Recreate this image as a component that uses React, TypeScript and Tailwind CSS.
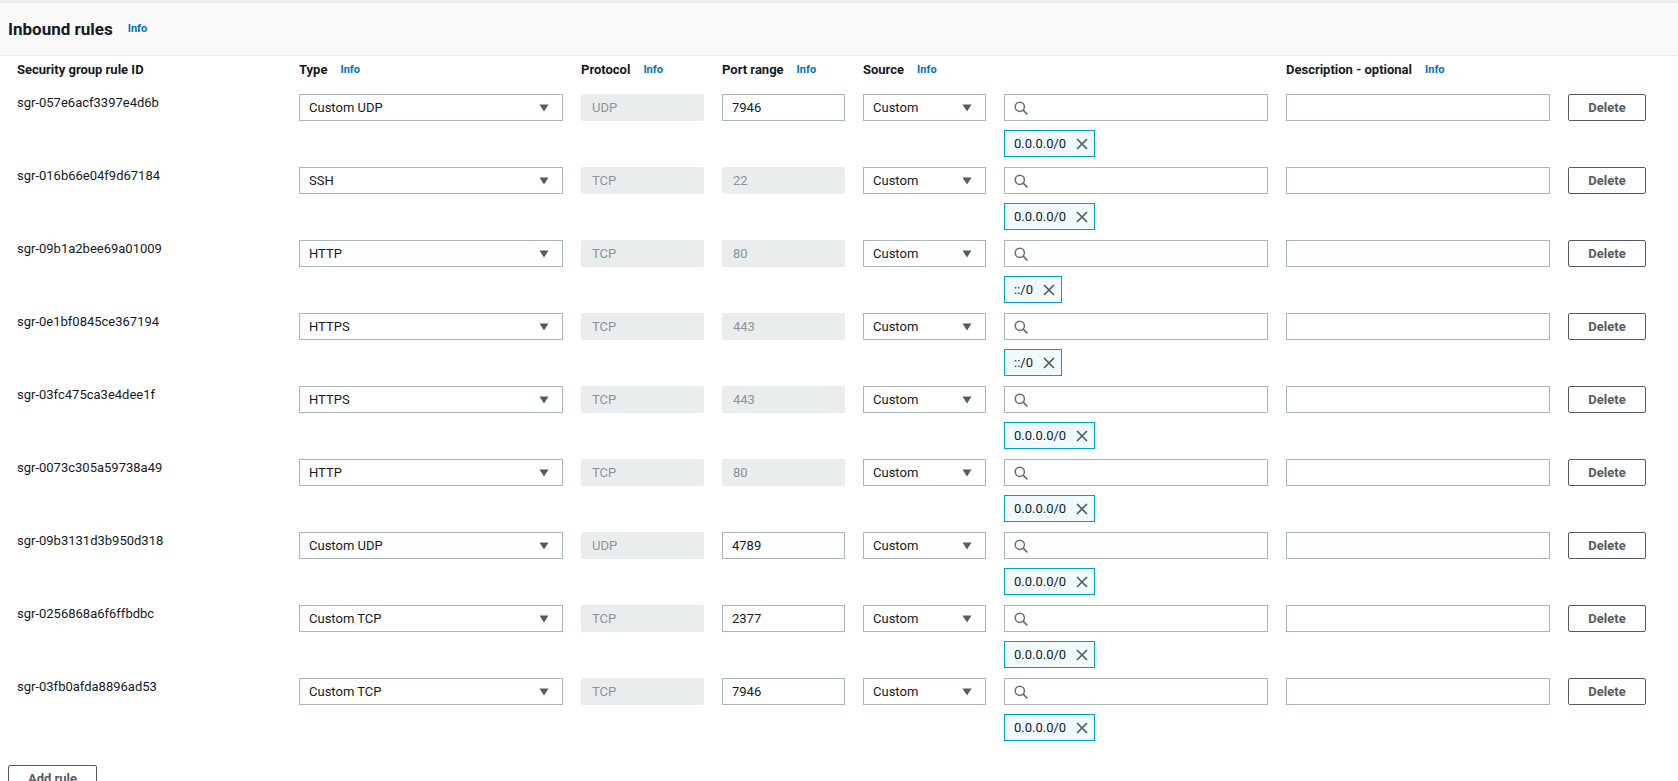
import React from "react";

type Rule = {
  id: string;
  type: string;
  protocol: string;
  port: string;
  portEditable: boolean;
  cidr: string;
};

const rules: Rule[] = [
  { id: "sgr-057e6acf3397e4d6b", type: "Custom UDP", protocol: "UDP", port: "7946", portEditable: true, cidr: "0.0.0.0/0" },
  { id: "sgr-016b66e04f9d67184", type: "SSH", protocol: "TCP", port: "22", portEditable: false, cidr: "0.0.0.0/0" },
  { id: "sgr-09b1a2bee69a01009", type: "HTTP", protocol: "TCP", port: "80", portEditable: false, cidr: "::/0" },
  { id: "sgr-0e1bf0845ce367194", type: "HTTPS", protocol: "TCP", port: "443", portEditable: false, cidr: "::/0" },
  { id: "sgr-03fc475ca3e4dee1f", type: "HTTPS", protocol: "TCP", port: "443", portEditable: false, cidr: "0.0.0.0/0" },
  { id: "sgr-0073c305a59738a49", type: "HTTP", protocol: "TCP", port: "80", portEditable: false, cidr: "0.0.0.0/0" },
  { id: "sgr-09b3131d3b950d318", type: "Custom UDP", protocol: "UDP", port: "4789", portEditable: true, cidr: "0.0.0.0/0" },
  { id: "sgr-0256868a6f6ffbdbc", type: "Custom TCP", protocol: "TCP", port: "2377", portEditable: true, cidr: "0.0.0.0/0" },
  { id: "sgr-03fb0afda8896ad53", type: "Custom TCP", protocol: "TCP", port: "7946", portEditable: true, cidr: "0.0.0.0/0" },
];

const Arrow = () => (
  <svg width="10" height="8" viewBox="0 0 10 8" className="shrink-0">
    <path d="M0.5 0.5 L9.5 0.5 L5 7.5 Z" fill="#545b64" />
  </svg>
);

const Search = () => (
  <svg width="14" height="14" viewBox="0 0 14 14" className="shrink-0" fill="none">
    <circle cx="5.8" cy="5.8" r="4.6" stroke="#687078" strokeWidth="1.5" />
    <path d="M9.2 9.2 L12.8 12.8" stroke="#687078" strokeWidth="1.8" strokeLinecap="round" />
  </svg>
);

const XIcon = () => (
  <svg width="12" height="12" viewBox="0 0 12 12" className="shrink-0" fill="none">
    <path d="M1 1 L11 11 M11 1 L1 11" stroke="#545b64" strokeWidth="1.7" />
  </svg>
);

const Info = () => (
  <span className="text-[11px] font-bold text-[#0073bb] leading-4">Info</span>
);

const Select = ({ value }: { value: string }) => (
  <div className="h-[27px] border border-[#aab7b8] bg-white flex items-center justify-between pl-[9px] pr-[13px] text-[13px] text-[#16191f]">
    <span>{value}</span>
    <Arrow />
  </div>
);

const Disabled = ({ value }: { value: string }) => (
  <div className="h-[27px] bg-[#eaeded] rounded-[2px] flex items-center pl-[11px] text-[13px] text-[#879596]">
    {value}
  </div>
);

const TextInput = ({ value }: { value?: string }) => (
  <div className="h-[27px] border border-[#aab7b8] bg-white flex items-center pl-[9px] text-[13px] text-[#16191f]">
    {value}
  </div>
);

export default function App() {
  const cols = "grid grid-cols-[264px_264px_123px_123px_123px_264px_264px_78px] gap-x-[18px]";
  return (
    <div
      className="w-[1678px] h-[781px] overflow-hidden bg-white text-[#16191f]"
      style={{ fontFamily: "Roboto, 'Liberation Sans', sans-serif" }}
    >
      <div className="border-t-[3px] border-[#eaeded]" />
      <div className="h-[53px] bg-[#fafafa] border-b border-[#eaeded] flex items-center pl-[8px] gap-[15px]">
        <h2 className="text-[17px] font-bold leading-5">Inbound rules</h2>
        <Info />
      </div>
      <div className="pl-[17px] pt-[6px]">
        <div className={`${cols} text-[13px] font-bold leading-4`}>
          <div>Security group rule ID</div>
          <div className="flex gap-[13px]"><span>Type</span><Info /></div>
          <div className="flex gap-[13px]"><span>Protocol</span><Info /></div>
          <div className="flex gap-[13px]"><span>Port range</span><Info /></div>
          <div className="flex gap-[13px]"><span>Source</span><Info /></div>
          <div />
          <div className="flex gap-[13px]"><span>Description - optional</span><Info /></div>
          <div />
        </div>
        <div className="mt-[16px] flex flex-col gap-[10px]">
          {rules.map((r) => (
            <div key={r.id} className={`${cols} items-start`}>
              <div className="text-[13px] leading-[18px]">{r.id}</div>
              <Select value={r.type} />
              <Disabled value={r.protocol} />
              {r.portEditable ? <TextInput value={r.port} /> : <Disabled value={r.port} />}
              <Select value="Custom" />
              <div className="flex flex-col items-start gap-[9px]">
                <div className="h-[27px] w-full border border-[#aab7b8] bg-white flex items-center pl-[9px]">
                  <Search />
                </div>
                <div className="h-[27px] border border-[#00a1c9] bg-[#f1faff] flex items-center pl-[9px] pr-[6px] gap-[10px] text-[13px] text-[#16191f]">
                  <span>{r.cidr}</span>
                  <XIcon />
                </div>
              </div>
              <TextInput />
              <button className="h-[27px] border border-[#545b64] rounded-[2px] bg-white text-[13px] font-bold text-[#545b64]">
                Delete
              </button>
            </div>
          ))}
        </div>
      </div>
      <div className="pl-[8px] mt-[24px]">
        <button className="w-[89px] h-[27px] border border-[#545b64] rounded-[2px] bg-white text-[13px] font-bold text-[#545b64]">
          Add rule
        </button>
      </div>
    </div>
  );
}
